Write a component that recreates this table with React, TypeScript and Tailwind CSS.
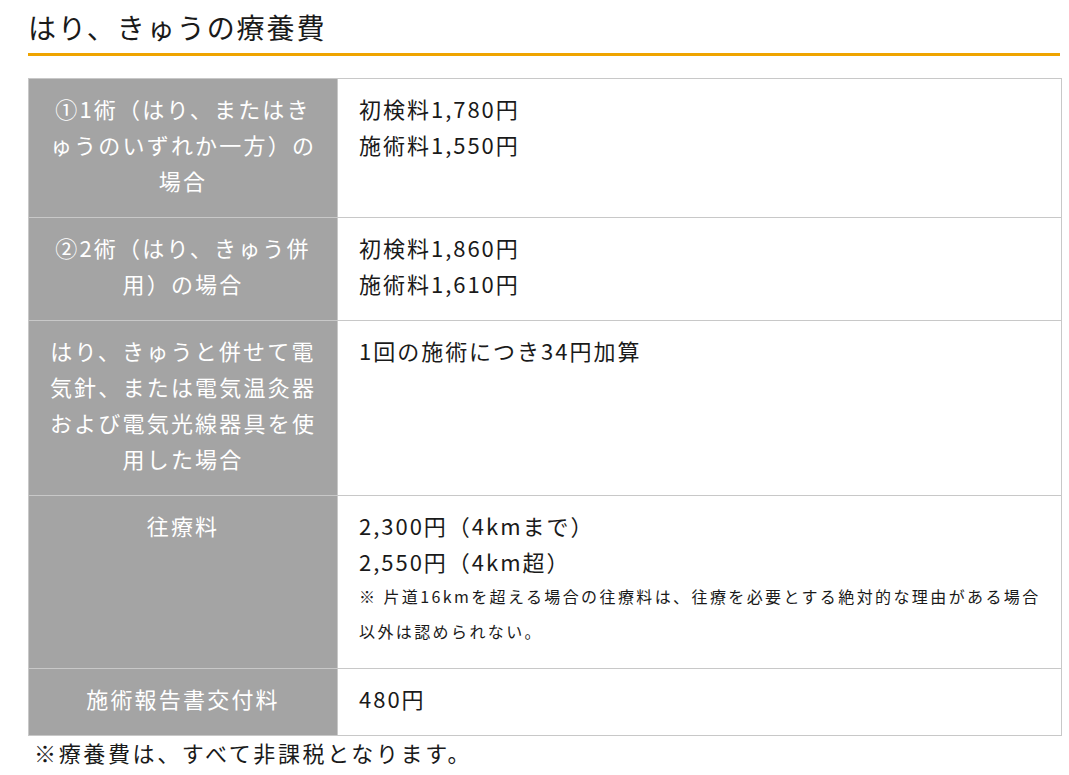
import React from "react";

const font = { fontFamily: '"Noto Sans CJK JP", "Noto Sans", sans-serif' };

function Row({ left, children, last }: { left: React.ReactNode; children: React.ReactNode; last?: boolean }) {
  return (
    <div className={`flex ${last ? "" : "border-b border-[#c8c8c8]"}`}>
      <div className="w-[308px] shrink-0 bg-[#a4a4a4] text-white text-center text-[22px] leading-[36px] tracking-[0.1em] px-[14px] pt-[11px] pb-[19px]">
        {left}
      </div>
      <div className="flex-1 bg-white text-[#1a1a1a] text-[22px] leading-[36px] tracking-[0.09em] pl-[21px] pr-[14px] pt-[11px] pb-[19px] border-l border-[#c8c8c8]">
        {children}
      </div>
    </div>
  );
}

export default function App() {
  return (
    <div className="bg-white min-h-[775px] w-[1069px]" style={font}>
      <div className="ml-[28px] w-[1034px]">
        <div className="w-[1032px] pt-[7px] pb-[6px] border-b-[3px] border-[#efa400] text-[28px] leading-[40px] tracking-[0.07em] text-[#1a1a1a]">
          はり、きゅうの療養費
        </div>
        <div className="mt-[22px] border border-[#c8c8c8]">
          <Row left={<>①1術（はり、またはき<br />ゅうのいずれか一方）の<br />場合</>}>
            初検料1,780円<br />施術料1,550円
          </Row>
          <Row left={<>②2術（はり、きゅう併<br />用）の場合</>}>
            初検料1,860円<br />施術料1,610円
          </Row>
          <Row left={<>はり、きゅうと併せて電<br />気針、または電気温灸器<br />および電気光線器具を使<br />用した場合</>}>
            1回の施術につき34円加算
          </Row>
          <Row left={<>往療料</>}>
            2,300円（4kmまで）<br />2,550円（4km超）
            <div className="text-[16px] leading-[35px] tracking-[0.15em] text-[#1a1a1a]">
              ※ 片道16kmを超える場合の往療料は、往療を必要とする絶対的な理由がある場合<br />以外は認められない。
            </div>
          </Row>
          <Row left={<>施術報告書交付料</>} last>
            480円
          </Row>
        </div>
        <div className="pl-[6px] -mt-[2px] text-[22px] leading-[36px] tracking-[0.12em] text-[#1a1a1a]">
          ※療養費は、すべて非課税となります。
        </div>
      </div>
    </div>
  );
}
